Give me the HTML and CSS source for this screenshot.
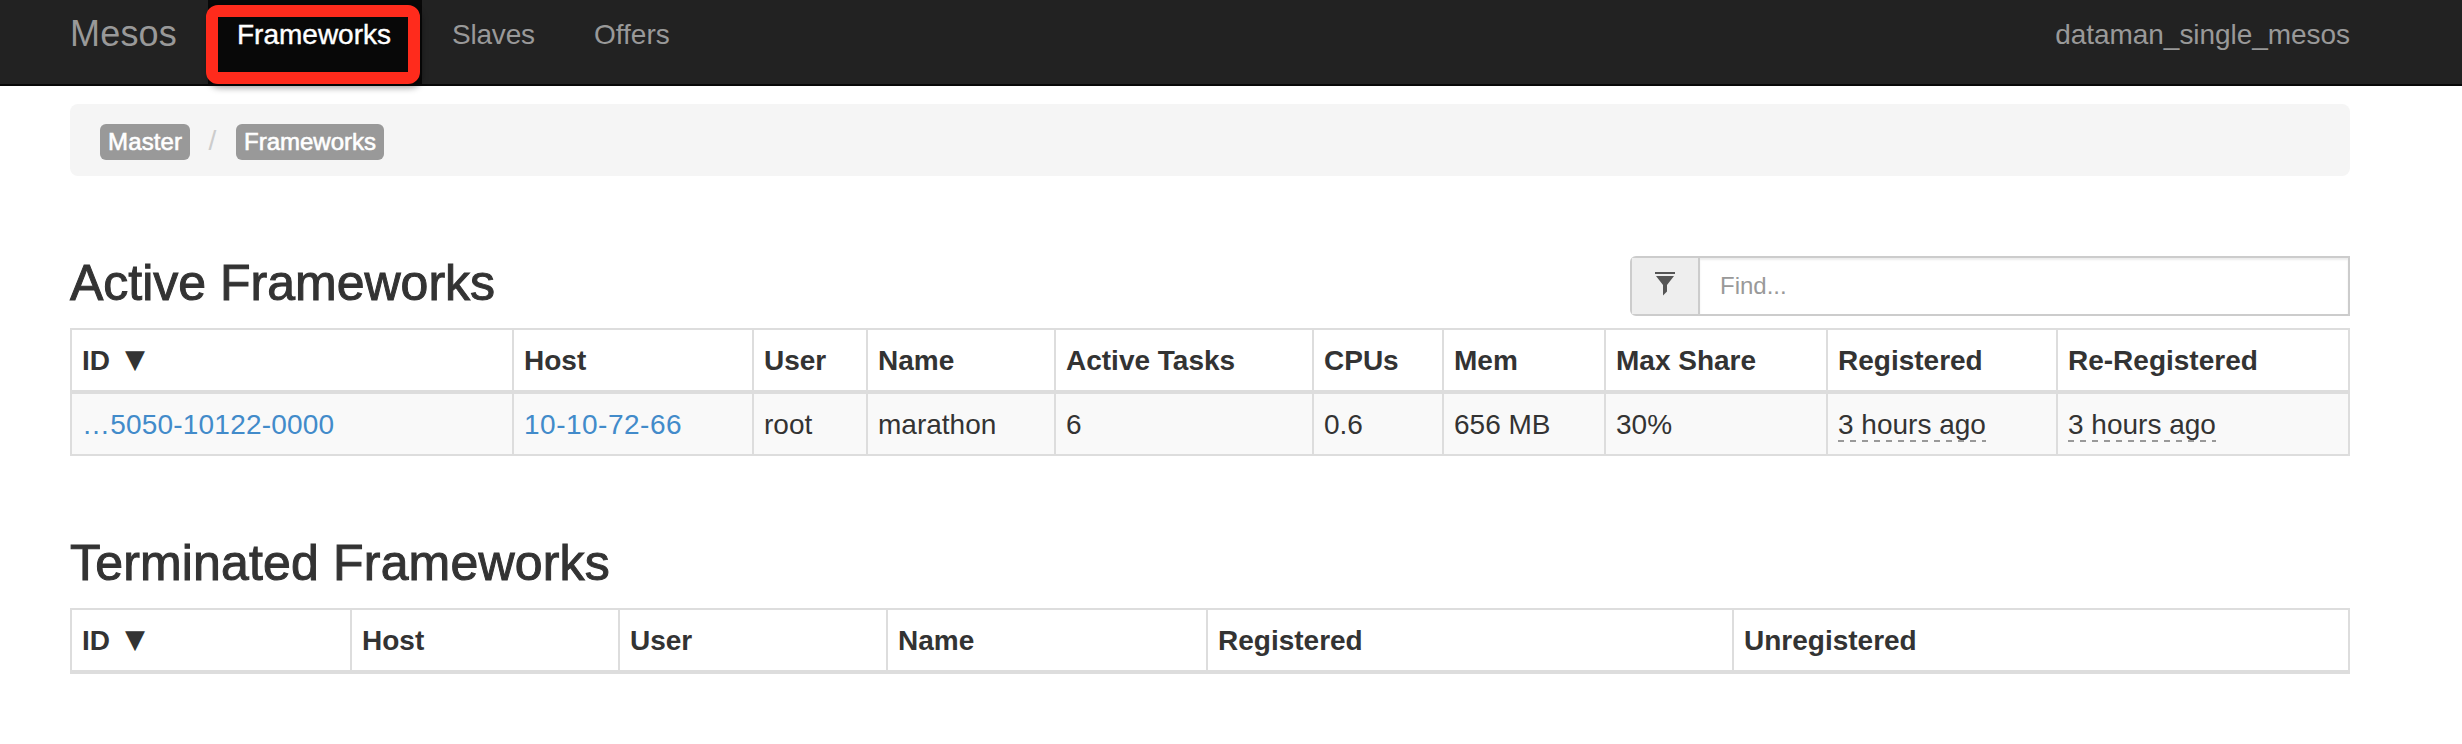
FILE: index.html
```html
<!DOCTYPE html>
<html lang="en">
<head>
<meta charset="utf-8">
<title>Mesos</title>
<link rel="stylesheet" href="styles.css">
</head>
<body>
<nav class="navbar">
  <a class="brand">Mesos</a>
  <a class="nav-item active">Frameworks<span class="highlight"></span></a>
  <a class="nav-item slaves">Slaves</a>
  <a class="nav-item">Offers</a>
  <span class="cluster">dataman_single_mesos</span>
</nav>
<main class="container">
  <div class="breadcrumb">
    <span class="badge master">Master</span>
    <span class="divider">/</span>
    <span class="badge">Frameworks</span>
  </div>
  <div class="section-head">
    <h2>Active Frameworks</h2>
    <div class="filter">
      <span class="addon"><svg width="20" height="24" viewBox="0 0 20 24"><path fill="#555" d="M0 0h20v2H0zM1 4h18l-7 9v6.500l-4 4V13z"/></svg></span>
      <input class="find" type="text" placeholder="Find...">
    </div>
  </div>
  <table class="table">
    <colgroup><col class="w442"><col class="w240"><col class="w114"><col class="w188"><col class="w258"><col class="w130"><col class="w162"><col class="w222"><col class="w230"><col class="w294"></colgroup>
    <thead><tr><th>ID<span class="sort">▼</span></th><th>Host</th><th>User</th><th>Name</th><th>Active Tasks</th><th>CPUs</th><th>Mem</th><th>Max Share</th><th>Registered</th><th>Re-Registered</th></tr></thead>
    <tbody><tr><td><a class="link id">…5050-10122-0000</a></td><td><a class="link host">10-10-72-66</a></td><td>root</td><td>marathon</td><td>6</td><td>0.6</td><td>656 MB</td><td>30%</td><td><span class="time">3 hours ago</span></td><td><span class="time">3 hours ago</span></td></tr></tbody>
  </table>
  <div class="section-head">
    <h2 class="terminated">Terminated Frameworks</h2>
  </div>
  <table class="table">
    <colgroup><col class="w280"><col class="w268"><col class="w268"><col class="w320"><col class="w526"><col class="w618"></colgroup>
    <thead><tr><th>ID<span class="sort">▼</span></th><th>Host</th><th>User</th><th>Name</th><th>Registered</th><th>Unregistered</th></tr></thead>
  </table>
</main>
</body>
</html>
```
FILE: styles.css
```css
* { box-sizing: border-box; }
body {
  margin: 0;
  background: #fff;
  color: #333;
  font: 28px/40px "Liberation Sans", Arial, sans-serif;
}
.navbar {
  display: flex;
  height: 86px;
  padding: 0 112px 0 70px;
  background: #222;
  border-bottom: 2px solid #080808;
  color: #999;
}
.brand {
  width: 138px;
  font-size: 36px;
  padding-top: 14px;
  letter-spacing: .2px;
}
.nav-item {
  position: relative;
  height: 86px;
  padding: 15px 30px 0;
}
.nav-item.active {
  width: 214px;
  padding-left: 29px;
  background: #080808;
  color: #fff;
  -webkit-text-stroke: .4px #fff;
}
.nav-item.slaves {
  width: 142px;
  letter-spacing: -.2px;
}
.highlight {
  position: absolute;
  left: -2px;
  top: 5px;
  width: 214px;
  height: 79px;
  border: 12px solid #ff2b1c;
  border-radius: 12px;
  box-shadow: 2px 4px 6px rgba(0, 0, 0, .35);
}
.cluster {
  margin-left: auto;
  padding-top: 15px;
  letter-spacing: -.05px;
}
.container {
  width: 2280px;
  margin: 18px 0 0 70px;
}
.breadcrumb {
  display: flex;
  align-items: flex-start;
  height: 72px;
  padding: 20px 30px;
  border-radius: 8px;
  background: #f5f5f5;
  font-size: 24px;
}
.badge {
  height: 36px;
  padding: 0 8px;
  border-radius: 6px;
  background: #999;
  color: #fff;
  line-height: 35px;
  -webkit-text-stroke: .6px #fff;
}
.badge.master {
  width: 90px;
  letter-spacing: .15px;
}
.divider {
  width: 46px;
  padding-right: 1px;
  text-align: center;
  color: #ccc;
  font-size: 28px;
  line-height: 34px;
}
.section-head {
  display: flex;
  justify-content: space-between;
  height: 152px;
  padding-top: 80px;
}
h2 {
  margin: 0;
  font-size: 50px;
  font-weight: 400;
  line-height: 54px;
  -webkit-text-stroke: 1px #333;
}
.terminated { letter-spacing: .17px; }
.filter {
  display: flex;
  width: 720px;
  height: 60px;
  border: 2px solid #ccc;
  border-radius: 6px 0 0 6px;
}
.addon {
  display: flex;
  width: 68px;
  padding: 14px 0 0 23px;
  background: #eee;
  border-right: 2px solid #ccc;
}
.find {
  flex: 1;
  min-width: 0;
  padding: 0 20px;
  border: 0;
  background: #fff;
  box-shadow: inset 0 2px 2px rgba(0, 0, 0, .075);
  font: 24px "Liberation Sans", Arial, sans-serif;
}
.find::placeholder { color: #999; }
.table {
  width: 2280px;
  table-layout: fixed;
  border-spacing: 0;
  border-collapse: separate;
}
th, td {
  padding: 11px 0 9px 10px;
  border-left: 2px solid #ddd;
  text-align: left;
  white-space: nowrap;
}
th:last-child, td:last-child { border-right: 2px solid #ddd; }
th {
  height: 66px;
  border-top: 2px solid #ddd;
  border-bottom: 4px solid #ddd;
}
td {
  height: 62px;
  border-bottom: 2px solid #ddd;
  background: #f9f9f9;
}
.sort {
  display: inline-block;
  height: 40px;
  margin-left: 15px;
  vertical-align: top;
  font: 400 26px/36px "DejaVu Sans", sans-serif;
}
.link { color: #428bca; }
.id { letter-spacing: .2px; }
.host { letter-spacing: .5px; }
.time {
  display: inline-block;
  height: 40px;
  vertical-align: top;
  background: repeating-linear-gradient(90deg, #999 0 6px, transparent 6px 12px) 0 35px / 100% 2px no-repeat;
}
.w442 { width: 442px; }
.w240 { width: 240px; }
.w114 { width: 114px; }
.w188 { width: 188px; }
.w258 { width: 258px; }
.w130 { width: 130px; }
.w162 { width: 162px; }
.w222 { width: 222px; }
.w230 { width: 230px; }
.w294 { width: 294px; }
.w280 { width: 280px; }
.w268 { width: 268px; }
.w320 { width: 320px; }
.w526 { width: 526px; }
.w618 { width: 618px; }
```
